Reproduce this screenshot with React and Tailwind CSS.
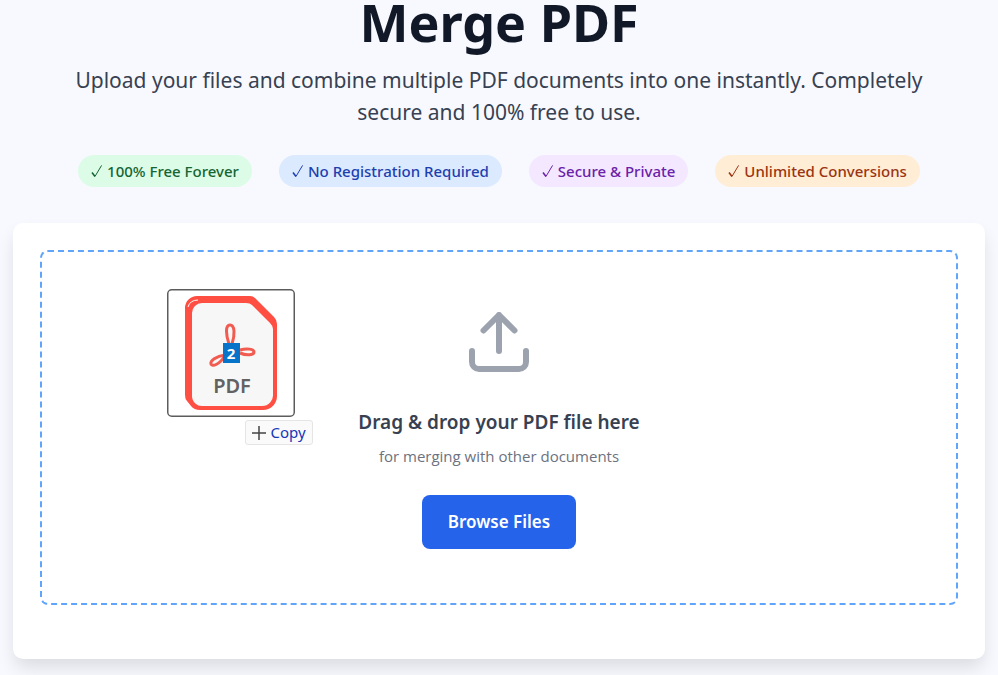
import { useState } from "react";

const BADGES = [
  { label: "100% Free Forever", color: "bg-[#dcfce7] text-[#166534]" },
  { label: "No Registration Required", color: "bg-[#dbeafe] text-[#1e40af]" },
  { label: "Secure & Private", color: "bg-[#f3e8ff] text-[#6b21a8]" },
  { label: "Unlimited Conversions", color: "bg-[#ffedd5] text-[#9a3412]" },
];

function CheckIcon() {
  return (
    <svg viewBox="0 0 12 14" className="h-3.5 w-3 shrink-0" fill="none" stroke="currentColor" aria-hidden="true">
      <path d="M1 8.6 4 12.4" strokeWidth="1.6" />
      <path d="M4 12.4 10.6 1.4" strokeWidth="1" />
    </svg>
  );
}

function UploadIcon() {
  return (
    <svg
      viewBox="0 0 60 60"
      className="size-15 text-[#9ca3af]"
      fill="none"
      stroke="currentColor"
      strokeWidth="6"
      strokeLinecap="round"
      strokeLinejoin="round"
      aria-hidden="true"
    >
      <path d="M3 39v11a7 7 0 0 0 7 7h40a7 7 0 0 0 7-7V39" />
      <path d="M30 39V3M14.500 18.500 30 3l15.500 15.500" />
    </svg>
  );
}

function PdfFileIcon() {
  return (
    <svg viewBox="0 0 128 128" className="size-32" aria-hidden="true">
      <rect x="0.750" y="0.750" width="126.500" height="126.500" rx="4" fill="#fff" stroke="#5c5c5c" strokeWidth="1.500" />
      <path
        d="M30 7h53q3 0 5 2l19 19q3 3 3 7v72a14 14 0 0 1-14 14H33q-6 0-9-4l-4-5q-2-2-2-6V19A12 12 0 0 1 30 7Z"
        fill="#ff4f43"
      />
      <path d="M35 14h44q4 0 6 2l18 18q3 3 3 6v65a11 11 0 0 1-11 12H36a10 10 0 0 1-11-10V24a10 10 0 0 1 10-10Z" fill="#f7f7f7" />
      <path d="M21 18q2-7 10-7" fill="none" stroke="#fff" strokeWidth="1" />
      <g fill="none" stroke="#f15b50" strokeWidth="3">
        <path d="M62 55c-3-9-4-19 1-19s5 10 2 19" />
        <path d="M73 61c7-2 14-1 14 2s-7 4-14 1" />
        <path d="M58 66c-9 1-15 6-14 9s8 1 14-8" />
      </g>
      <text
        x="65"
        y="104"
        textAnchor="middle"
        className="fill-[#626262] font-['Noto_Sans',sans-serif] text-[20px] font-semibold"
      >
        PDF
      </text>
      <rect x="56" y="54" width="17" height="20" fill="#0874c9" />
      <text x="64" y="70" textAnchor="middle" className="fill-white font-['Open_Sans',sans-serif] text-[15px] font-bold">
        2
      </text>
    </svg>
  );
}

function DragPreview() {
  return (
    <div className="pointer-events-none absolute top-[37px] left-[125px] w-[146px]">
      <PdfFileIcon />
      <div className="mt-[3px] ml-auto flex h-[25px] w-17 items-center justify-center gap-1 rounded-[3px] border border-[#e5e5e5] bg-[#fafafa] text-[15px] text-[#1237b8]">
        <svg viewBox="0 0 14 14" className="size-3.5" stroke="#444" strokeWidth="1.500" aria-hidden="true">
          <path d="M7 0v14M0 7h14" />
        </svg>
        <span>Copy</span>
      </div>
    </div>
  );
}

export default function App() {
  const [dragging, setDragging] = useState(true);

  return (
    <div className="min-h-screen bg-[#f8f9ff] px-[13px] pb-4 font-['Noto_Sans',sans-serif]">
      <header className="flex flex-col items-center text-center">
        <h1 className="text-[52px] leading-[44px] font-bold text-[#111827]">Merge PDF</h1>
        <p className="mt-5 max-w-[900px] text-[21px] leading-8 text-[#374151]">
          Upload your files and combine multiple PDF documents into one instantly. Completely secure and 100% free to
          use.
        </p>
        <ul className="mt-[27px] flex flex-wrap justify-center gap-x-[27px] gap-y-3">
          {BADGES.map((badge) => (
            <li
              key={badge.label}
              className={`flex h-8 items-center gap-1 rounded-full px-[13px] text-[15px] font-medium ${badge.color}`}
            >
              <CheckIcon />
              {badge.label}
            </li>
          ))}
        </ul>
      </header>

      <main className="mt-9 rounded-[10px] bg-white px-[27px] pt-[27px] pb-[54px] shadow-[0_10px_18px_-2px_rgba(0,0,0,0.12)]">
        <section
          onDragEnter={() => setDragging(true)}
          onDrop={() => setDragging(false)}
          className="relative flex flex-col items-center rounded-lg border-2 border-dashed border-[#60a5fa] px-6 pt-15 pb-[54px] text-center"
        >
          <UploadIcon />
          <h2 className="mt-9 text-[19px] leading-7 font-semibold text-[#374151]">Drag &amp; drop your PDF file here</h2>
          <p className="mt-2 font-['Open_Sans','Noto_Sans',sans-serif] text-[15px] leading-6 text-[#6b7280]">
            for merging with other documents
          </p>
          <button type="button" className="mt-[27px] h-[54px] rounded-lg bg-[#2563eb] px-[26px] text-[17px] font-semibold text-white">
            Browse Files
          </button>
          {dragging && <DragPreview />}
        </section>
      </main>
    </div>
  );
}
